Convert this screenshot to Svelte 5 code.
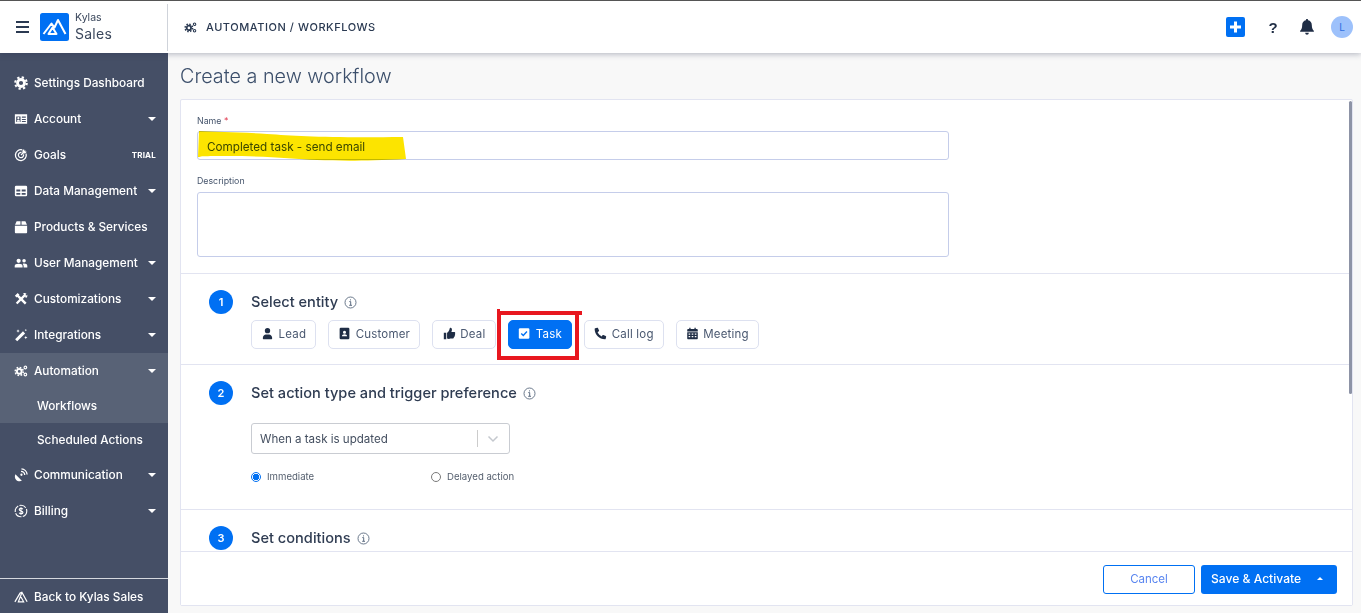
<script>
  const ICONS = {
    gear: '<circle cx="8" cy="8" r="4" fill="none" stroke="currentColor" stroke-width="3.2"/><circle cx="8" cy="8" r="6.6" fill="none" stroke="currentColor" stroke-width="2.4" stroke-dasharray="2.6 2.58"/>',
    cogs: '<circle cx="6" cy="8.5" r="2.7" fill="none" stroke="currentColor" stroke-width="2.2"/><circle cx="6" cy="8.5" r="4.6" fill="none" stroke="currentColor" stroke-width="1.8" stroke-dasharray="1.9 1.7"/><circle cx="13" cy="4" r="1.5" fill="none" stroke="currentColor" stroke-width="1.3"/><circle cx="13" cy="12" r="1.5" fill="none" stroke="currentColor" stroke-width="1.3"/>',
    account: '<path fill="currentColor" fill-rule="evenodd" d="M1 2.5h14v11H1zM2.5 5v6.5h5V5zM9 5v1.500h4.500V5zM9 8v1.200h4.500V8zM9 10.300v1.200h4.500v-1.200z"/><circle cx="5" cy="7" r="1.2" fill="currentColor"/><path fill="currentColor" d="M3.200 11c0-1.500.8-2.200 1.800-2.200s1.800.7 1.800 2.200z"/>',
    goals: '<path fill="none" stroke="currentColor" stroke-width="1.5" d="M9.500 2.200A6.200 6.200 0 1 0 13.800 6.500"/><path fill="none" stroke="currentColor" stroke-width="1.4" d="M8.600 5.100A3 3 0 1 0 10.900 7.400"/><path stroke="currentColor" stroke-width="1.5" d="M8 8l5-5"/><path fill="currentColor" d="M11.500 1.200l.3 2.800 2.900.3-2 2-2.900-.3-.3-2.800z"/>',
    table: '<path fill="currentColor" fill-rule="evenodd" d="M2.500 2h11A1.500 1.500 0 0 1 15 3.500v9a1.500 1.500 0 0 1-1.500 1.500h-11A1.500 1.500 0 0 1 1 12.500v-9A1.500 1.500 0 0 1 2.500 2zM2.700 6.300v2.400h4.500V6.300zM8.800 6.300v2.400h4.500V6.300zM2.700 10.200v2.200h4.500v-2.200zM8.800 10.200v2.200h4.500v-2.200z"/>',
    box: '<path fill="currentColor" d="M1 6.500h14V14a1 1 0 0 1-1 1H2a1 1 0 0 1-1-1zM1.200 5.500 3 1.500h4.400v4zM8.600 1.500H13l1.800 4H8.600z"/>',
    users: '<circle cx="5.300" cy="5.500" r="2.400" fill="currentColor"/><circle cx="11.500" cy="5.500" r="2" fill="currentColor"/><path fill="currentColor" d="M.8 13v-1.500C.8 9.800 2.500 8.800 5.300 8.800s4.500 1 4.500 2.700V13zM11 13v-1.600c0-1-.4-1.800-1.100-2.400.6-.2 1.100-.3 1.700-.3 2 0 3.600.9 3.600 2.500V13z"/>',
    tools: '<path stroke="currentColor" stroke-width="2.600" d="M3 13.200 13 3"/><path stroke="currentColor" stroke-width="2.800" d="M3.600 3.600l9.800 9.800"/><path fill="currentColor" d="M1 4.200 4.200 1l2 2-3.200 3.200zM10.500 1.500c1.300-.7 2.800-.5 3.800.5l-2 2 .8.800 2-1.600c.5 1.500 0 3-1.500 3.700z"/>',
    wand: '<path stroke="currentColor" stroke-width="3.400" d="M2.500 14 11.500 5"/><path fill="currentColor" d="M4.600 1.500l.6 1.300 1.300.6-1.300.6-.6 1.300-.6-1.300-1.300-.6 1.300-.6zM13.500 9l.6 1.300 1.300.6-1.300.6-.6 1.300-.6-1.300-1.300-.6 1.300-.6zM13.500 1l.4 1 1 .4-1 .4-.4 1-.4-1-1-.4 1-.4z"/>',
    dish: '<path fill="currentColor" d="M1.600 7.200 9 14.600C6.500 15.600 3.800 15 2.300 13.300.8 11.800.6 9.200 1.600 7.200z"/><path fill="none" stroke="currentColor" stroke-width="1.500" d="M8 3.800A4.500 4.500 0 0 1 12.300 8M8.500 1A7 7 0 0 1 15 7.500"/><circle cx="8.500" cy="7.700" r="1.300" fill="currentColor"/>',
    dollar: '<circle cx="8" cy="8" r="6.600" fill="none" stroke="currentColor" stroke-width="1.300" stroke-dasharray="8 1.500"/><path fill="none" stroke="currentColor" stroke-width="1.300" d="M10 6c-.4-.8-1.100-1.100-2-1.100-1.200 0-2 .6-2 1.500 0 2 4.200 1.200 4.200 3.200 0 .9-.9 1.500-2.200 1.500-1 0-1.700-.4-2.100-1.100M8 3.800v8.400"/>',
    peaks: '<path fill="none" stroke="currentColor" stroke-width="1.400" d="M1 13.500 7 3.500l2-1 6 11M9 3 5 13.500h6L8 8"/>',
    person: '<circle cx="8" cy="4.500" r="3.300" fill="currentColor"/><path fill="currentColor" d="M2.300 14.500v-1.300c0-2.400 2-4 3.700-4h4c1.700 0 3.700 1.600 3.700 4v1.300c0 .3-.3.500-.6.500H2.900c-.3 0-.6-.2-.6-.5z"/>',
    contact: '<path fill="currentColor" fill-rule="evenodd" d="M3.500 1h9A1.500 1.500 0 0 1 14 2.500v11a1.500 1.500 0 0 1-1.500 1.500h-9A1.500 1.500 0 0 1 2 13.500v-11A1.500 1.500 0 0 1 3.500 1zM8 4.500A1.900 1.900 0 1 0 8 8.300 1.900 1.900 0 0 0 8 4.500zM4.800 11.500h6.400c0-1.600-1.300-2.500-3.200-2.500s-3.200.9-3.200 2.500z"/>',
    thumb: '<path fill="currentColor" d="M1 7h3v8H1zM5 7.200c1.500-1.200 2.600-2.700 3-4.500.2-1 .5-1.700 1.300-1.700 1.100 0 1.700 1 1.700 2.300 0 1-.4 1.900-.7 2.700h3.300c1 0 1.500.7 1.500 1.500 0 .5-.2.900-.5 1.200.3.300.4.700.3 1.200-.1.400-.3.700-.6 1 .1.400.1.800-.2 1.200-.2.300-.4.500-.7.600 0 1-.7 1.500-1.700 1.500H9C7.500 15 6 14.500 5 14z"/>',
    check: '<rect x="1" y="1.500" width="13" height="13" rx="1.500" fill="currentColor"/><path fill="none" stroke="#0070f3" stroke-width="1.700" d="M4 8l2.500 2.500L11 5.500"/>',
    phone: '<path fill="currentColor" d="M3.800 1 1.500 1.600C1 1.700.8 2.100.8 2.500c0 6.900 5.800 12.700 12.700 12.700.4 0 .8-.3.900-.7l.6-2.400c.1-.4-.1-.9-.6-1.100l-2.800-1.200c-.4-.2-.9-.1-1.100.3l-1.200 1.500C7.400 10.500 5.500 8.600 4.400 6.500l1.500-1.200c.4-.3.500-.7.300-1.100L5 1.500C4.800 1.100 4.300.9 3.800 1z"/>',
    calendar: '<path fill="currentColor" fill-rule="evenodd" d="M4 .8h1.600v1.700h4.800V.8H12v1.700h1.200c.8 0 1.300.6 1.300 1.300V5.500h-13V3.800c0-.7.500-1.300 1.300-1.300H4zM1.500 6.500h13v7.200c0 .8-.5 1.300-1.300 1.300H2.800c-.8 0-1.300-.5-1.300-1.300zM3.200 8v1.500h2V8zM7 8v1.500h2V8zM10.800 8v1.500h2V8zM3.200 11v1.500h2V11zM7 11v1.500h2V11zM10.800 11v1.500h2V11z"/>'
  };

  const NAV = [
    { label: 'Settings Dashboard', icon: 'gear' },
    { label: 'Account', icon: 'account', caret: true },
    { label: 'Goals', icon: 'goals', trial: true },
    { label: 'Data Management', icon: 'table', caret: true },
    { label: 'Products & Services', icon: 'box' },
    { label: 'User Management', icon: 'users', caret: true },
    { label: 'Customizations', icon: 'tools', caret: true },
    { label: 'Integrations', icon: 'wand', caret: true },
    { label: 'Automation', icon: 'cogs', caret: true, active: true, children: ['Workflows', 'Scheduled Actions'] },
    { label: 'Communication', icon: 'dish', caret: true },
    { label: 'Billing', icon: 'dollar', caret: true }
  ];

  const ENTITIES = [
    { label: 'Lead', icon: 'person' },
    { label: 'Customer', icon: 'contact' },
    { label: 'Deal', icon: 'thumb' },
    { label: 'Task', icon: 'check', selected: true },
    { label: 'Call log', icon: 'phone' },
    { label: 'Meeting', icon: 'calendar' }
  ];
</script>

{#snippet icon(name, size = 14)}
  <svg class="icon" width={size} height={size} viewBox="0 0 16 16" aria-hidden="true">{@html ICONS[name]}</svg>
{/snippet}

{#snippet info()}
  <svg class="info" width="13" height="13" viewBox="0 0 13 13" aria-hidden="true">
    <circle cx="6.500" cy="6.500" r="5.500" fill="none" stroke="#5b6b80" stroke-width="0.9" />
    <path d="M5.300 5.600h1.400v3.500M5.200 9.300h2.800M6.500 3.400v1" fill="none" stroke="#5b6b80" stroke-width="1" />
  </svg>
{/snippet}

<div class="page">
  <header class="topbar">
    <div class="brand">
      <div class="burger"><span></span><span></span><span></span></div>
      <svg class="logo" width="29" height="28" viewBox="0 0 29 28" aria-hidden="true">
        <rect width="29" height="28" rx="2.500" fill="#0070f3" />
        <path d="M3.500 21 11.500 10.500 14.500 14.500 18 7 25.500 21M8.500 21 12.500 14.500 16.500 21Z" fill="none" stroke="#fff" stroke-width="2" stroke-linejoin="round" />
      </svg>
      <div class="brand-text">
        <span class="brand-top">Kylas</span>
        <span class="brand-sub">Sales</span>
      </div>
    </div>
    <div class="crumb">
      {@render icon('cogs', 13)}
      <span>AUTOMATION / WORKFLOWS</span>
    </div>
    <div class="top-actions">
      <span class="plus"><svg width="19" height="20" viewBox="0 0 19 20" aria-hidden="true"><rect width="19" height="20" rx="2" fill="#0070f3" /><path d="M9.500 4.500v11M4 10h11" stroke="#fff" stroke-width="3" /></svg></span>
      <span class="help">?</span>
      <svg class="bell" width="14" height="16" viewBox="0 0 14 16" aria-hidden="true"><path fill="#1f2d45" d="M7 0c.7 0 1.100.5 1.100 1.200C10.500 1.700 11.800 3.500 11.800 6c0 3.500 1 4.700 2 5.800.3.400.1 1-.5 1H.7c-.6 0-.8-.6-.5-1C1.200 10.700 2.200 9.500 2.200 6c0-2.500 1.300-4.300 3.700-4.800C5.900.500 6.300 0 7 0zM5.200 13.800h3.600C8.800 15 8 15.700 7 15.700s-1.800-.7-1.800-1.900z" /></svg>
      <span class="avatar">L</span>
    </div>
  </header>

  <div class="body">
    <nav class="sidebar">
      <div class="nav-list">
        {#each NAV as item}
          <div class="nav-item" class:active={item.active}>
            <span class="nav-icon">{@render icon(item.icon)}</span>
            <span class="nav-label">{item.label}</span>
            {#if item.caret}<span class="caret"></span>{/if}
            {#if item.trial}<span class="trial">TRIAL</span>{/if}
          </div>
          {#if item.children}
            {#each item.children as child, i}
              <div class="nav-child" class:current={i === 0}>{child}</div>
            {/each}
          {/if}
        {/each}
      </div>
      <div class="nav-footer">
        <span class="nav-icon">{@render icon('peaks')}</span>
        <span class="nav-label">Back to Kylas Sales</span>
      </div>
    </nav>

    <main class="content">
      <h1>Create a new workflow</h1>
      <div class="card">
        <div class="scroll">
          <div class="form-top">
            <label class="field-label" for="wf-name">Name <em>*</em></label>
            <div class="name-wrap">
              <input id="wf-name" class="text-input" value="Completed task - send email" />
              <!-- highlighter stroke painted over the input in the screenshot -->
              <svg class="marker" width="212" height="32" viewBox="0 0 212 32" aria-hidden="true">
                <path fill="#fce400" d="M2 1C20 2 40 2 70 4S130 8 206 7L209 29C170 31 145 31 120 30S70 26 30 26 10 27 1 27Z" />
              </svg>
            </div>
            <label class="field-label desc-label" for="wf-desc">Description</label>
            <textarea id="wf-desc" class="text-input area"></textarea>
          </div>

          <section class="step step-1">
            <div class="step-head">
              <span class="num">1</span>
              <h2>Select entity</h2>
              {@render info()}
            </div>
            <div class="entities">
              {#each ENTITIES as ent}
                <button class="entity" class:selected={ent.selected}>
                  {@render icon(ent.icon, 13)}
                  <span>{ent.label}</span>
                  {#if ent.selected}<span class="redbox"></span>{/if}
                </button>
              {/each}
            </div>
          </section>

          <section class="step step-2">
            <div class="step-head">
              <span class="num">2</span>
              <h2>Set action type and trigger preference</h2>
              {@render info()}
            </div>
            <div class="select">
              <span class="select-value">When a task is updated</span>
              <span class="select-sep"></span>
              <svg width="12" height="8" viewBox="0 0 12 8" aria-hidden="true"><path d="M1.500 1.500 6 6l4.500-4.500" fill="none" stroke="#c4c8ce" stroke-width="1.500" /></svg>
            </div>
            <div class="radios">
              <label class="radio radio-first"><span class="dot on"></span>Immediate</label>
              <label class="radio"><span class="dot"></span>Delayed action</label>
            </div>
          </section>

          <section class="step step-3">
            <div class="step-head">
              <span class="num">3</span>
              <h2>Set conditions</h2>
              {@render info()}
            </div>
          </section>
        </div>
        <span class="scrollbar"></span>
        <footer class="card-footer">
          <button class="btn-cancel">Cancel</button>
          <div class="btn-save">
            <span>Save &amp; Activate</span>
            <span class="up"></span>
          </div>
        </footer>
      </div>
    </main>
  </div>
</div>

<style>
  :global(body) { margin: 0; background: #f8f8f8; }
  .page { height: 613px; width: 1361px; overflow: hidden; display: flex; flex-direction: column; font-family: Inter, "Noto Sans", sans-serif; color: #2b3a52; }

  .topbar { height: 52px; flex: none; box-sizing: content-box; border-top: 1px solid #555; display: flex; align-items: center; background: #fff; position: relative; z-index: 2; box-shadow: 0 1px 6px rgba(40, 50, 80, .35); }
  .brand { width: 167px; height: 47px; border-right: 1px solid #cfd3da; display: flex; align-items: center; flex: none; }
  .burger { margin-left: 16px; width: 13px; display: flex; flex-direction: column; gap: 3px; }
  .burger span { height: 2px; background: #2b3a52; }
  .logo { margin-left: 11px; flex: none; }
  .brand-text { margin-left: 6px; display: flex; flex-direction: column; color: #3a475c; }
  .brand-top { font-size: 10.500px; line-height: 14px; }
  .brand-sub { font-size: 14px; line-height: 18px; letter-spacing: .25px; }
  .crumb { margin-left: 16px; display: flex; align-items: center; gap: 9px; font-size: 11px; font-weight: 500; letter-spacing: .55px; color: #2b3a52; }
  .top-actions { margin-left: auto; display: flex; align-items: center; padding-right: 8px; }
  .plus { display: flex; }
  .help { margin-left: 21px; width: 14px; text-align: center; font-weight: 700; font-size: 15px; color: #1f2d45; font-family: "Liberation Sans", sans-serif; }
  .bell { margin-left: 20px; }
  .avatar { margin-left: 17px; width: 22px; height: 22px; border-radius: 50%; background: #9dc1fb; color: #2f6fe0; font-size: 10px; display: flex; align-items: center; justify-content: center; }

  .body { flex: 1; display: flex; min-height: 0; }
  .sidebar { width: 168px; flex: none; background: #454f66; color: #fff; display: flex; flex-direction: column; padding-top: 12px; box-sizing: border-box; }
  .nav-list { flex: 1; }
  .nav-item { height: 36px; display: flex; align-items: center; padding: 0 12px 0 14px; font-size: 11.800px; font-weight: 500; }
  .nav-item.active { background: #586276; }
  .nav-icon { width: 20px; display: flex; flex: none; }
  .nav-label { white-space: nowrap; padding-bottom: 1px; }
  .caret { margin-left: auto; border-left: 4px solid transparent; border-right: 4px solid transparent; border-top: 4px solid #fff; }
  .trial { margin-left: auto; font-size: 8px; font-weight: 700; letter-spacing: .2px; }
  .nav-child { height: 34px; box-sizing: border-box; display: flex; align-items: center; padding: 0 0 1px 37px; font-size: 11.800px; font-weight: 500; }
  .nav-child.current { background: #586276; }
  .nav-footer { height: 35px; box-sizing: border-box; border-top: 1px solid #d5d8de; display: flex; align-items: center; padding: 2px 0 0 14px; font-size: 11.800px; font-weight: 500; }

  .content { flex: 1; min-width: 0; padding: 0 8px 7px 12px; display: flex; flex-direction: column; }
  h1 { margin: 0; height: 46px; display: flex; align-items: center; font-size: 19.800px; font-weight: 300; color: #3c4f6b; flex: none; }
  .card { flex: 1; min-height: 0; background: #fff; border: 1px solid #e2e4f1; border-radius: 2px; display: flex; flex-direction: column; position: relative; }
  .scroll { flex: 1; min-height: 0; overflow: hidden; }

  .form-top { height: 174px; box-sizing: border-box; padding: 15px 16px 0; border-bottom: 1px solid #e2e4f1; }
  .field-label { display: block; font-size: 8.800px; line-height: 12px; color: #46556c; }
  .field-label em { color: #e0364c; font-style: normal; }
  .desc-label { margin-top: 15px; }
  .name-wrap { position: relative; margin-top: 4px; width: 752px; }
  .text-input { display: block; box-sizing: border-box; width: 752px; height: 29px; border: 1px solid #c5cdea; border-radius: 3px; background: #fff; padding: 2px 9px 0; font: 11.700px Inter, sans-serif; color: #3c4f5c; outline: none; }
  .area { height: 65px; margin-top: 5px; resize: none; }
  .marker { position: absolute; left: 0; top: -1px; mix-blend-mode: multiply; pointer-events: none; }

  .step { box-sizing: border-box; padding-left: 28px; border-bottom: 1px solid #e2e4f1; }
  .step-1 { height: 91px; padding-top: 16px; }
  .step-2 { height: 145px; padding-top: 16px; }
  .step-3 { border-bottom: 0; padding-top: 16px; }
  .step-head { display: flex; align-items: center; height: 24px; }
  .num { width: 24px; height: 24px; border-radius: 50%; background: #0070f3; color: #fff; font-size: 11px; font-weight: 600; display: flex; align-items: center; justify-content: center; flex: none; }
  h2 { margin: 0 6px 0 18px; padding-bottom: 1px; font-size: 14.600px; font-weight: 500; color: #2f3c52; }
  .info { flex: none; }

  .entities { display: flex; gap: 12px; margin: 6px 0 0 42px; }
  .entity { height: 29px; min-width: 64px; box-sizing: border-box; display: flex; align-items: center; justify-content: center; gap: 4.500px; padding: 0 9px 2px; background: #fff; border: 1px solid #dde1f0; border-radius: 5px; font: 11.500px Inter, sans-serif; letter-spacing: .2px; color: #4a5870; }
  .entity .icon { color: #1f2d45; }
  .entity.selected { background: #0070f3; border-color: #0070f3; color: #fff; position: relative; }
  .entity.selected .icon { color: #fff; }
  .redbox { position: absolute; left: -12px; top: -10px; width: 82px; height: 49px; border: 4px solid #e8171f; box-sizing: border-box; pointer-events: none; }
  .redbox::before { content: ""; position: absolute; left: -4px; top: -6px; width: 3px; height: 2px; background: #e8171f; }
  .redbox::after { content: ""; position: absolute; left: calc(100% + 4px); top: -4px; width: 3px; height: 4px; background: #e8171f; }

  .select { margin: 18px 0 0 42px; width: 259px; height: 31px; box-sizing: border-box; border: 1px solid #c9ccd2; border-radius: 3px; display: flex; align-items: center; padding: 0 10px 0 8px; }
  .select-value { flex: 1; font-size: 11.550px; color: #444f60; }
  .select-sep { width: 1px; height: 17px; background: #ccc; margin-right: 9px; }
  .radios { display: flex; margin: 17px 0 0 42px; }
  .radio { display: flex; align-items: center; gap: 6px; font-size: 9.600px; color: #56606f; }
  .radio-first { width: 180px; }
  .dot { width: 10px; height: 10px; box-sizing: border-box; border: 1px solid #7a7a7a; border-radius: 50%; background: #fff; }
  .dot.on { border-color: #0070f3; background: radial-gradient(circle, #0070f3 0 3px, #fff 3.400px); }

  .scrollbar { position: absolute; right: 0; top: 1px; width: 3px; height: 293px; background: #8d93a6; border-radius: 2px; }
  .card-footer { height: 54px; flex: none; box-sizing: border-box; border-top: 1px solid #e2e4f1; display: flex; align-items: center; justify-content: flex-end; gap: 6px; padding: 1px 15px 0 0; background: #fff; }
  .btn-cancel { width: 92px; height: 29px; background: #fff; border: 1px solid #0070f3; border-radius: 3px; color: #5a86f0; font: 11.500px Inter, sans-serif; }
  .btn-save { width: 136px; height: 29px; box-sizing: border-box; background: #0070f3; border-radius: 3px; color: #fff; font-size: 12.100px; font-weight: 500; display: flex; align-items: center; padding: 0 10px 1px; }
  .up { margin-left: auto; margin-right: 4px; border-left: 3.500px solid transparent; border-right: 3.500px solid transparent; border-bottom: 3.500px solid #fff; }
</style>
